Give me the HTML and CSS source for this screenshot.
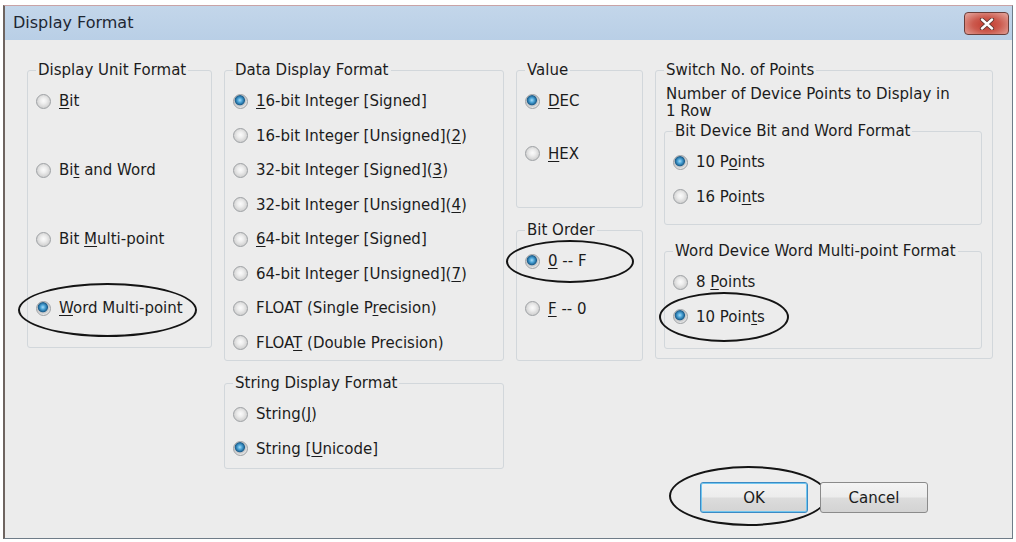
FILE: index.html
```html
<!DOCTYPE html>
<html lang="en">

<head>
    <meta charset="UTF-8">
    <title>Display Format</title>
    <link rel="stylesheet" href="styles.css">
</head>

<body>
    <div class="window">
        <div class="titlebar">
            <span class="caption">Display Format</span>
            <span class="close-btn">
                <svg width="18" height="12" viewBox="0 0 18 12">
                    <path d="M4 1.5 L14 10.5 M14 1.5 L4 10.5" stroke="#5c3934" stroke-width="4.2" stroke-linecap="round" />
                    <path d="M4 1.5 L14 10.5 M14 1.5 L4 10.5" stroke="#ffffff" stroke-width="2.4" stroke-linecap="round" />
                </svg>
            </span>
        </div>

        <div class="client">
            <div class="columns">
                <div class="col">
                    <fieldset class="group unit-group">
                        <legend>Display Unit Format</legend>
                        <div class="opts wide">
                            <label class="opt"><span class="radio"></span><span><u>B</u>it</span></label>
                            <label class="opt"><span class="radio"></span><span>Bi<u>t</u> and Word</span></label>
                            <label class="opt"><span class="radio"></span><span>Bit <u>M</u>ulti-point</span></label>
                            <label class="opt"><span class="radio on"></span><span><u>W</u>ord Multi-point</span>
                                <span class="oval oval-word"></span></label>
                        </div>
                    </fieldset>
                </div>

                <div class="col">
                    <fieldset class="group data-group">
                        <legend>Data Display Format</legend>
                        <div class="opts">
                            <label class="opt"><span class="radio on"></span><span><u>1</u>6-bit Integer [Signed]</span></label>
                            <label class="opt"><span class="radio"></span><span>16-bit Integer [Unsigned](<u>2</u>)</span></label>
                            <label class="opt"><span class="radio"></span><span>32-bit Integer [Signed](<u>3</u>)</span></label>
                            <label class="opt"><span class="radio"></span><span>32-bit Integer [Unsigned](<u>4</u>)</span></label>
                            <label class="opt"><span class="radio"></span><span><u>6</u>4-bit Integer [Signed]</span></label>
                            <label class="opt"><span class="radio"></span><span>64-bit Integer [Unsigned](<u>7</u>)</span></label>
                            <label class="opt"><span class="radio"></span><span>FLOAT (Single P<u>r</u>ecision)</span></label>
                            <label class="opt"><span class="radio"></span><span>FLOA<u>T</u> (Double Precision)</span></label>
                        </div>
                    </fieldset>
                    <fieldset class="group string-group">
                        <legend>String Display Format</legend>
                        <div class="opts">
                            <label class="opt"><span class="radio"></span><span>String(<u>J</u>)</span></label>
                            <label class="opt"><span class="radio on"></span><span>String [<u>U</u>nicode]</span></label>
                        </div>
                    </fieldset>
                </div>

                <div class="col">
                    <fieldset class="group value-group">
                        <legend>Value</legend>
                        <div class="opts">
                            <label class="opt"><span class="radio on"></span><span><u>D</u>EC</span></label>
                            <label class="opt"><span class="radio"></span><span><u>H</u>EX</span></label>
                        </div>
                    </fieldset>
                    <fieldset class="group order-group">
                        <legend>Bit Order</legend>
                        <div class="opts">
                            <label class="opt"><span class="radio on"></span><span><u>0</u> -- F</span>
                                <span class="oval oval-order"></span></label>
                            <label class="opt"><span class="radio"></span><span><u>F</u> -- 0</span></label>
                        </div>
                    </fieldset>
                </div>

                <div class="col">
                    <fieldset class="group switch-group">
                        <legend>Switch No. of Points</legend>
                        <div class="desc">Number of Device Points to Display in<br>1 Row</div>
                        <fieldset class="group sub-group bit-sub">
                            <legend>Bit Device Bit and Word Format</legend>
                            <div class="opts">
                                <label class="opt"><span class="radio on"></span><span>10 P<u>o</u>ints</span></label>
                                <label class="opt"><span class="radio"></span><span>16 Poi<u>n</u>ts</span></label>
                            </div>
                        </fieldset>
                        <fieldset class="group sub-group word-sub">
                            <legend>Word Device Word Multi-point Format</legend>
                            <div class="opts">
                                <label class="opt"><span class="radio"></span><span>8 <u>P</u>oints</span></label>
                                <label class="opt"><span class="radio on"></span><span>10 Poin<u>t</u>s</span>
                                    <span class="oval oval-points"></span></label>
                            </div>
                        </fieldset>
                    </fieldset>
                </div>
            </div>

            <div class="footer">
                <button class="btn btn-default">OK<span class="oval oval-ok"></span></button>
                <button class="btn">Cancel</button>
            </div>
        </div>
    </div>
</body>

</html>
```

FILE: styles.css
```css
* {
    box-sizing: border-box;
}

body {
    margin: 0;
    background-color: #ffffff;
    font-family: "DejaVu Sans", "Noto Sans CJK JP", sans-serif;
    font-size: 15px;
    color: #1c1c1c;
}

.window {
    display: flex;
    flex-direction: column;
    width: 1010px;
    height: 534px;
    margin: 5px 0 0 3px;
    border: 1px solid #6f7c88;
    border-top-color: #c9a3a6;
    border-left: 2px solid #6e6460;
    background-color: #ececec;
}

.titlebar {
    display: flex;
    align-items: center;
    justify-content: space-between;
    height: 34px;
    padding-left: 8px;
    background: linear-gradient(#c3d6ea, #b9cfe6);
    flex: none;
}

.caption {
    font-size: 16px;
    color: #1e2733;
    margin-top: -1px;
}

.close-btn {
    display: flex;
    align-items: center;
    justify-content: center;
    align-self: flex-start;
    width: 45px;
    height: 23px;
    margin-top: 6px;
    margin-right: 3px;
    border: 1px solid #6a3e3a;
    border-radius: 4px;
    background: radial-gradient(ellipse at 50% 55%, #c2392c 0, #cc5b4f 45%, #dc8e84 80%, #e6aaa2 100%);
}

.client {
    flex: 1;
    padding: 21px 0 0 22px;
}

.columns {
    display: grid;
    grid-template-columns: 185px 280px 127px 338px;
    column-gap: 12px;
    align-items: start;
}

.col {
    display: flex;
    flex-direction: column;
    gap: 13px;
}

.group {
    margin: 0;
    min-width: 0;
    padding: 5px 8px 0 8px;
    border: 1px solid #d2d7db;
    border-radius: 3px;
}

.group>legend {
    padding: 0 2px;
    line-height: 18px;
    white-space: nowrap;
}

.opts {
    display: flex;
    flex-direction: column;
}

.opts.wide {
    gap: 34.5px;
}

.opt {
    position: relative;
    display: flex;
    align-items: center;
    height: 34.5px;
    white-space: nowrap;
}

.opt u {
    text-underline-offset: 2px;
}

.radio {
    flex: none;
    width: 15px;
    height: 15px;
    margin: 0 8px 0 0;
    border: 1px solid #9ea1a4;
    border-radius: 50%;
    background: radial-gradient(circle at 50% 45%, #fbfbfb 0, #eeeeee 30%, #d6d6d6 65%, #c4c4c4 100%);
}

.radio.on {
    background: radial-gradient(circle at 45% 40%, #a6dcf8 0, #4aa3d6 22%, #1c5f8e 44%, #c2c4c6 52%, #e6e6e6 70%, #c6c6c6 100%);
}

.unit-group {
    padding-bottom: 21px;
}

.string-group {
    padding-bottom: 2px;
}

.value-group {
    padding-bottom: 36px;
}

.value-group .opts {
    gap: 18px;
}

.order-group {
    padding-bottom: 34px;
}

.order-group .opts {
    gap: 13px;
}

.switch-group {
    padding-bottom: 9px;
}

.desc {
    padding: 2px 0 0 2px;
    line-height: 17px;
}

.sub-group {
    margin-right: 2px;
}

.bit-sub {
    margin-top: 2px;
    padding-bottom: 10px;
}

.word-sub {
    margin-top: 17px;
    padding-bottom: 14px;
}

.footer {
    display: flex;
    justify-content: flex-end;
    gap: 12px;
    margin-top: 13px;
    padding-right: 84px;
}

.btn {
    position: relative;
    width: 108px;
    height: 31px;
    padding: 0;
    border: 1px solid #8b8b8b;
    border-radius: 3px;
    background: linear-gradient(#f4f4f4 0, #ececec 48%, #dcdcdc 52%, #d3d3d3 100%);
    font-family: inherit;
    font-size: 15px;
    color: #1c1c1c;
}

.btn-default {
    border-color: #3b8ac4;
    box-shadow: inset 0 0 0 1px #71c6ef;
}

.oval {
    position: absolute;
    border: 2px solid #141414;
    border-radius: 50%;
    pointer-events: none;
}

.oval-word {
    left: -18px;
    top: -8px;
    width: 179px;
    height: 54px;
}

.oval-order {
    left: -19px;
    top: -4px;
    width: 128px;
    height: 43px;
}

.oval-points {
    left: -14px;
    top: -8px;
    width: 130px;
    height: 50px;
}

.oval-ok {
    left: -32px;
    top: -17px;
    width: 159px;
    height: 60px;
}
```
